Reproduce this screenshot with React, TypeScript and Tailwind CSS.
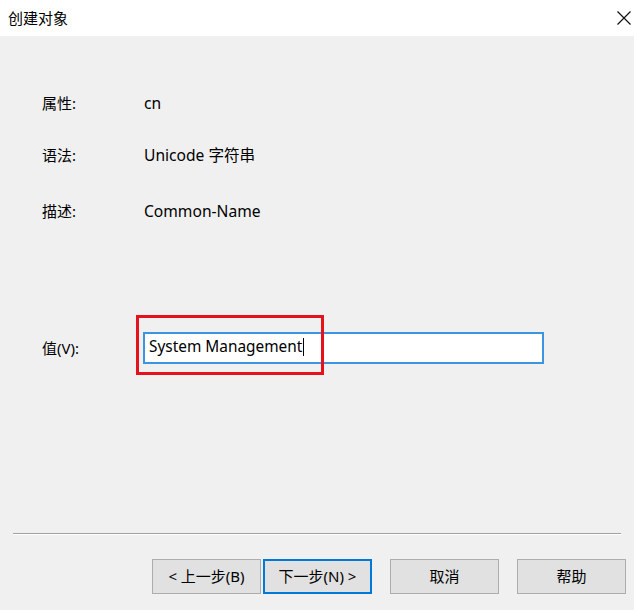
import React from 'react';

const font = { fontFamily: '"Noto Sans", "Noto Sans CJK SC", sans-serif' };

function Row({ label, value, className }: { label: string; value: string; className?: string }) {
  return (
    <div className={`flex h-5 items-center text-[15px] leading-5 text-black ${className ?? ''}`}>
      <span className="w-[102px] shrink-0">{label}</span>
      <span className="text-[15.6px]">{value}</span>
    </div>
  );
}

function DialogButton({ children, primary }: { children: React.ReactNode; primary?: boolean }) {
  return (
    <button
      type="button"
      className={`flex h-[35px] w-[109px] items-center justify-center bg-[#e1e1e1] text-[15px] text-black ${
        primary ? 'border-2 border-[#0078d7]' : 'border border-[#adadad]'
      }`}
    >
      {children}
    </button>
  );
}

export default function App() {
  return (
    <div className="flex h-[610px] w-[634px] flex-col bg-[#f0f0f0]" style={font}>
      <header className="flex h-9 shrink-0 items-center justify-between bg-white pl-2 pr-[3px]">
        <span className="text-[15px] text-black">创建对象</span>
        <svg width="14" height="14" viewBox="0 0 14 14">
          <path d="M0.5 0.5 L13.5 13.5 M13.5 0.5 L0.5 13.5" stroke="#111" strokeWidth="1.2" />
        </svg>
      </header>

      <main className="flex flex-1 flex-col pl-[42px]">
        <Row label="属性:" value="cn" className="mt-[57px]" />
        <Row label="语法:" value="Unicode 字符串" className="mt-8" />
        <Row label="描述:" value="Common-Name" className="mt-9" />

        <div className="mt-[111px] flex items-center text-[15px] text-black">
          <span className="w-[101px] shrink-0">值(V):</span>
          <div className="relative">
            <div className="flex h-8 w-[401px] items-center border-2 border-[#3b95e3] bg-white pb-[3px] pl-[4px] text-[15.4px] text-black">
              System Management
              <span className="ml-px inline-block h-[18px] w-px bg-black" />
            </div>
            <div className="absolute left-[-7px] top-[-17px] h-[60px] w-[188px] border-[3px] border-[#e5121e]" />
          </div>
        </div>
      </main>

      <div className="mx-[13px] h-px shrink-0 bg-[#a0a0a0]" />
      <div className="mx-[13px] h-px shrink-0 bg-white" />

      <footer className="mb-4 mt-6 flex shrink-0 items-center pl-[152px]">
        <DialogButton>&lt; 上一步(B)</DialogButton>
        <div className="ml-[2px]">
          <DialogButton primary>下一步(N) &gt;</DialogButton>
        </div>
        <div className="ml-[18px]">
          <DialogButton>取消</DialogButton>
        </div>
        <div className="ml-[18px]">
          <DialogButton>帮助</DialogButton>
        </div>
      </footer>
    </div>
  );
}
